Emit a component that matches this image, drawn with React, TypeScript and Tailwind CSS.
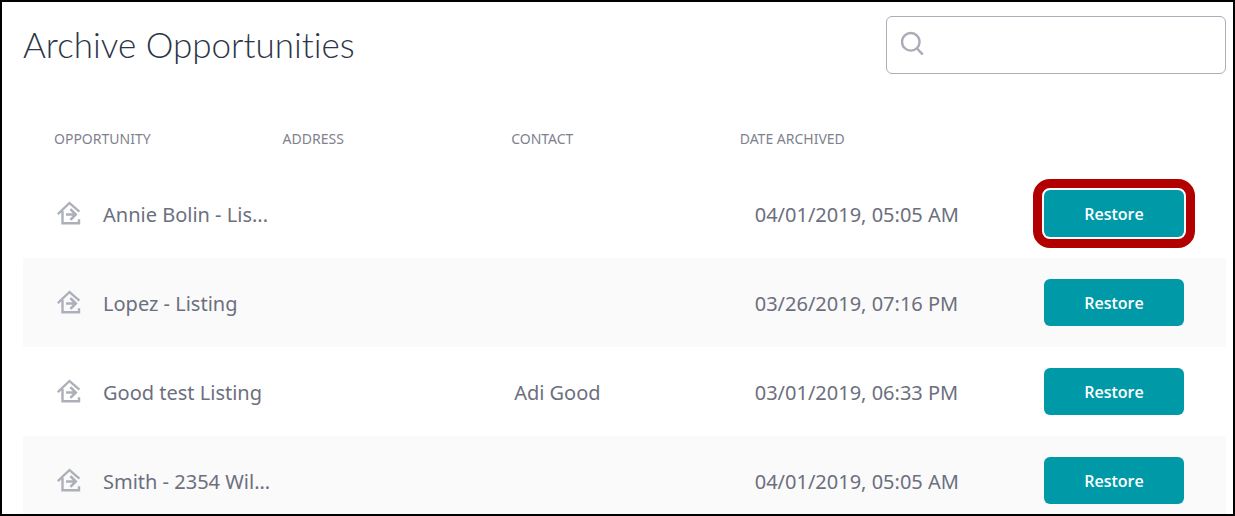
type Opportunity = { name: string; contact: string; date: string; highlighted?: boolean };

const opportunities: Opportunity[] = [
  { name: "Annie Bolin - Lis...", contact: "", date: "04/01/2019, 05:05 AM", highlighted: true },
  { name: "Lopez - Listing", contact: "", date: "03/26/2019, 07:16 PM" },
  { name: "Good test Listing", contact: "Adi Good", date: "03/01/2019, 06:33 PM" },
  { name: "Smith - 2354 Wil...", contact: "", date: "04/01/2019, 05:05 AM" },
];

function HouseIcon() {
  return (
    <svg
      aria-hidden="true"
      viewBox="0 0 24 24"
      className="mb-1 h-6 w-6 shrink-0 text-[#adb0b9]"
      fill="none"
      stroke="currentColor"
      strokeWidth="2.4"
    >
      <path d="M.8 13.2 12.5 2 22.4 10.6M5.5 10V22.3H22V18.2" />
      <path d="M9 13.5H18.4M13.4 8.1 18.8 13.5 13.4 18.9" strokeWidth="2.6" />
    </svg>
  );
}

function SearchIcon() {
  return (
    <svg
      aria-hidden="true"
      viewBox="0 0 24 24"
      className="h-6 w-6 shrink-0 text-[#a9acb6]"
      fill="none"
      stroke="currentColor"
      strokeWidth="2.4"
    >
      <circle cx="9.8" cy="10.8" r="8.8" />
      <path d="M15.8 17.2 21.8 23.6" />
    </svg>
  );
}

export default function App() {
  return (
    <main className="h-screen overflow-hidden border-2 border-black bg-white pr-[7px] pl-[21px] font-['Noto_Sans',sans-serif] text-[#6c6f7e]">
      <header className="flex items-start justify-between pt-[14px]">
        <h1 className="pt-1 font-['Lato',sans-serif] text-[35px] leading-[48px] font-light text-[#2b3547] [font-variant-ligatures:none]">
          Archive Opportunities
        </h1>
        <label className="flex h-[58px] w-[340px] items-start rounded-md border border-[#abaeb9] px-[14px] pt-[14px]">
          <SearchIcon />
          <input
            type="search"
            aria-label="Search archived opportunities"
            className="ml-3 min-w-0 flex-1 bg-transparent text-xl outline-none"
          />
        </label>
      </header>
      <table className="mt-[35px] w-full table-fixed border-collapse text-left text-xl whitespace-nowrap">
        <colgroup>
          <col className="w-[19%]" />
          <col className="w-[19%]" />
          <col className="w-[19%]" />
          <col />
          <col className="w-[193px]" />
        </colgroup>
        <thead>
          <tr className="h-[60px] text-sm text-[#7f828e] [&>th]:pl-[31px] [&>th]:font-normal">
            <th scope="col">OPPORTUNITY</th>
            <th scope="col">ADDRESS</th>
            <th scope="col">CONTACT</th>
            <th scope="col">DATE ARCHIVED</th>
            <td />
          </tr>
        </thead>
        <tbody>
          {opportunities.map((item, index) => (
            <tr key={index} className="h-[89px] even:bg-[#fafafa]">
              <td className="pt-[2px] pl-[34px]">
                <div className="flex items-center gap-[22px]">
                  <HouseIcon />
                  <span>{item.name}</span>
                </div>
              </td>
              <td />
              <td className="pt-[2px] pl-[34px]">{item.contact}</td>
              <td className="pt-[2px] pl-[46px]">{item.date}</td>
              <td className="pl-[11px]">
                <button
                  type="button"
                  className={`block h-[47px] w-[140px] rounded-md bg-[#0099a8] font-['Open_Sans',sans-serif] text-base font-semibold text-white ${
                    item.highlighted
                      ? "outline-[9px] outline-offset-2 outline-[#b20000] outline-solid"
                      : ""
                  }`}
                >
                  Restore
                </button>
              </td>
            </tr>
          ))}
        </tbody>
      </table>
    </main>
  );
}
